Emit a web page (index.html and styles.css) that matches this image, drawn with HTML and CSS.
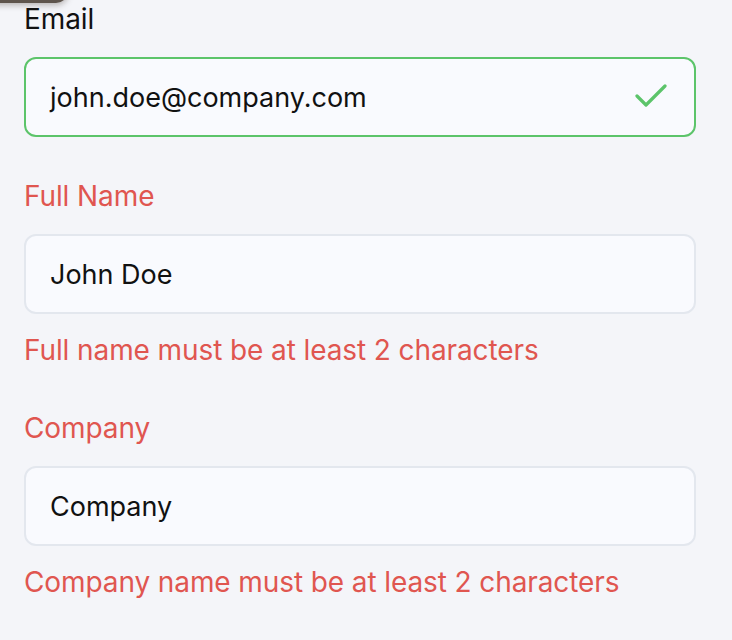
FILE: index.html
```html
<!DOCTYPE html>
<html>
<head>
<meta charset="utf-8">
<link rel="stylesheet" href="styles.css">
</head>
<body>
<div class="top-shadow"></div>
<form class="form">
  <div class="field">
    <label class="label">Email</label>
    <div class="input input-valid">
      <span class="value">john.doe@company.com</span>
      <svg class="check" width="34" height="26" viewBox="0 0 34 26"><path d="M3 12 L12 21 L31 2" fill="none" stroke="#5cc46a" stroke-width="3.2" stroke-linecap="round" stroke-linejoin="round"/></svg>
    </div>
  </div>
  <div class="field">
    <label class="label label-error">Full Name</label>
    <div class="input"><span class="value">John Doe</span></div>
    <div class="error">Full name must be at least 2 characters</div>
  </div>
  <div class="field">
    <label class="label label-error">Company</label>
    <div class="input"><span class="value">Company</span></div>
    <div class="error">Company name must be at least 2 characters</div>
  </div>
</form>
</body>
</html>
```
FILE: styles.css
```css
html, body {
  margin: 0;
  padding: 0;
  background: #f4f5f9;
}
body {
  font-family: Inter, "Noto Sans", sans-serif;
  color: #111;
  position: relative;
  height: 640px;
  overflow: hidden;
}
.top-shadow {
  position: absolute;
  left: -10px;
  top: -14px;
  width: 78px;
  height: 17px;
  border-radius: 0 0 12px 0;
  background: #5e554d;
  box-shadow: 0 2px 6px rgba(60, 50, 40, 0.35);
}
.form {
  display: flex;
  flex-direction: column;
  gap: 43px;
  padding: 3px 36px 0 24px;
}
.field {
  display: flex;
  flex-direction: column;
}
.label {
  font-size: 28px;
  line-height: 32px;
  font-weight: 400;
  color: #111;
  margin-bottom: 22px;
  letter-spacing: -0.1px;
}
.label-error {
  color: #e05650;
}
.input {
  height: 76px;
  box-sizing: content-box;
  border: 2px solid #e3e7ee;
  border-radius: 12px;
  background: #f9fafe;
  display: flex;
  align-items: center;
  justify-content: space-between;
  padding: 0 24px;
}
.input-valid {
  border-color: #5cc46a;
}
.value {
  font-size: 27px;
  color: #111;
}
.check {
  margin-right: 2px;
}
.error {
  margin-top: 20px;
  margin-bottom: 3px;
  font-size: 28px;
  line-height: 32px;
  color: #e05650;
  letter-spacing: -0.1px;
}
```
